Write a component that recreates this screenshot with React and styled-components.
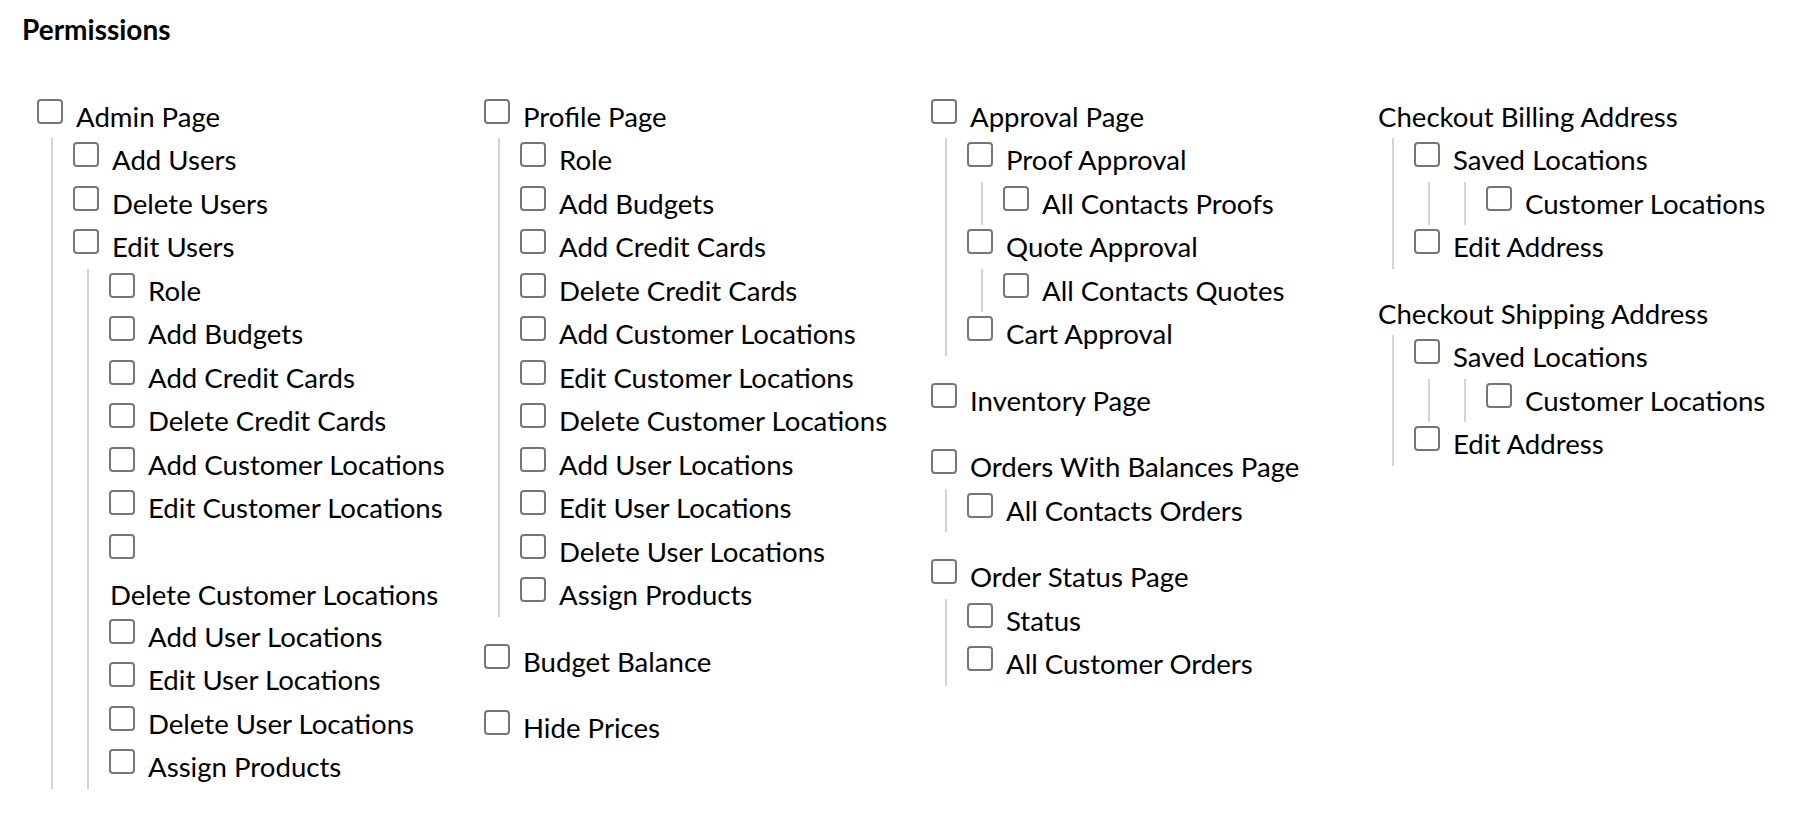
import styled, { createGlobalStyle } from 'styled-components';

const GlobalStyle = createGlobalStyle`
  html, body {
    margin: 0;
    background: #ffffff;
  }
  body {
    font-family: Lato, "Noto Sans", sans-serif;
    color: #000000;
  }
`;

const columns = [
  [
    { label: 'Admin Page', children: [
      { label: 'Add Users' },
      { label: 'Delete Users' },
      { label: 'Edit Users', children: [
        { label: 'Role' },
        { label: 'Add Budgets' },
        { label: 'Add Credit Cards' },
        { label: 'Delete Credit Cards' },
        { label: 'Add Customer Locations' },
        { label: 'Edit Customer Locations' },
        { label: 'Delete Customer Locations', wrapped: true },
        { label: 'Add User Locations' },
        { label: 'Edit User Locations' },
        { label: 'Delete User Locations' },
        { label: 'Assign Products' },
      ] },
    ] },
  ],
  [
    { label: 'Profile Page', children: [
      { label: 'Role' },
      { label: 'Add Budgets' },
      { label: 'Add Credit Cards' },
      { label: 'Delete Credit Cards' },
      { label: 'Add Customer Locations' },
      { label: 'Edit Customer Locations' },
      { label: 'Delete Customer Locations' },
      { label: 'Add User Locations' },
      { label: 'Edit User Locations' },
      { label: 'Delete User Locations' },
      { label: 'Assign Products' },
    ] },
    { label: 'Budget Balance' },
    { label: 'Hide Prices' },
  ],
  [
    { label: 'Approval Page', children: [
      { label: 'Proof Approval', children: [
        { label: 'All Contacts Proofs' },
      ] },
      { label: 'Quote Approval', children: [
        { label: 'All Contacts Quotes' },
      ] },
      { label: 'Cart Approval' },
    ] },
    { label: 'Inventory Page' },
    { label: 'Orders With Balances Page', children: [
      { label: 'All Contacts Orders' },
    ] },
    { label: 'Order Status Page', children: [
      { label: 'Status' },
      { label: 'All Customer Orders' },
    ] },
  ],
  [
    { label: 'Checkout Billing Address', heading: true, children: [
      { label: 'Saved Locations', children: [
        { children: [
          { label: 'Customer Locations' },
        ] },
      ] },
      { label: 'Edit Address' },
    ] },
    { label: 'Checkout Shipping Address', heading: true, children: [
      { label: 'Saved Locations', children: [
        { children: [
          { label: 'Customer Locations' },
        ] },
      ] },
      { label: 'Edit Address' },
    ] },
  ],
];

const PermissionNode = ({ node }) => {
  const { label, heading, wrapped, children } = node;

  return (
    <NodeWithStyled>
      { label && (
        heading
          ? <GroupTitleWithStyled>{ label }</GroupTitleWithStyled>
          : (
            <RowWithStyled>
              <CheckboxWithStyled type="checkbox" $wrapped={wrapped} />
              <LabelWithStyled $wrapped={wrapped}>{ label }</LabelWithStyled>
            </RowWithStyled>
          )
      ) }
      { children && (
        <ChildrenWithStyled>
          { children.map((child, i) => <PermissionNode key={i} node={child} />) }
        </ChildrenWithStyled>
      ) }
    </NodeWithStyled>
  );
};

const App = () => (
  <PageWithStyled>
    <GlobalStyle />
    <TitleWithStyled>Permissions</TitleWithStyled>
    <GridWithStyled>
      { columns.map((column, i) => (
        <ColumnWithStyled key={i}>
          { column.map((node, j) => (
            <TopGroupWithStyled key={j}>
              <PermissionNode node={node} />
            </TopGroupWithStyled>
          )) }
        </ColumnWithStyled>
      )) }
    </GridWithStyled>
  </PageWithStyled>
);

const PageWithStyled = styled.div`
  padding: 0 2px 0 22px;
  font-size: 27.6px;
  line-height: 43.5px;
`;

const TitleWithStyled = styled.h2`
  margin: 8px 0 43px;
  font-size: 28px;
  font-weight: 700;
  line-height: 43.5px;
`;

const GridWithStyled = styled.div`
  display: grid;
  grid-template-columns: repeat(4, 447px);
`;

const ColumnWithStyled = styled.div`
  padding-left: 15px;
`;

const TopGroupWithStyled = styled.div`
  margin-bottom: 23px;
`;

const NodeWithStyled = styled.div``;

const RowWithStyled = styled.div`
  display: flex;
  flex-wrap: wrap;
  align-items: flex-start;
`;

const CheckboxWithStyled = styled.input`
  appearance: none;
  box-sizing: border-box;
  flex: 0 0 auto;
  width: 26px;
  height: 25px;
  margin: 4px 0 ${({ $wrapped }) => ($wrapped ? '15px' : '0')};
  border: 2px solid #767676;
  border-radius: 4px;
  background: #ffffff;
`;

const LabelWithStyled = styled.span`
  margin-left: ${({ $wrapped }) => ($wrapped ? '1px' : '13px')};
  flex-basis: ${({ $wrapped }) => ($wrapped ? '100%' : 'auto')};
  line-height: ${({ $wrapped }) => ($wrapped ? '41px' : 'inherit')};
  white-space: nowrap;
`;

const GroupTitleWithStyled = styled.div`
  white-space: nowrap;
`;

const ChildrenWithStyled = styled.div`
  margin-left: 14px;
  padding-left: 20px;
  border-left: 2px solid #d4d4d4;
`;

export default App;
